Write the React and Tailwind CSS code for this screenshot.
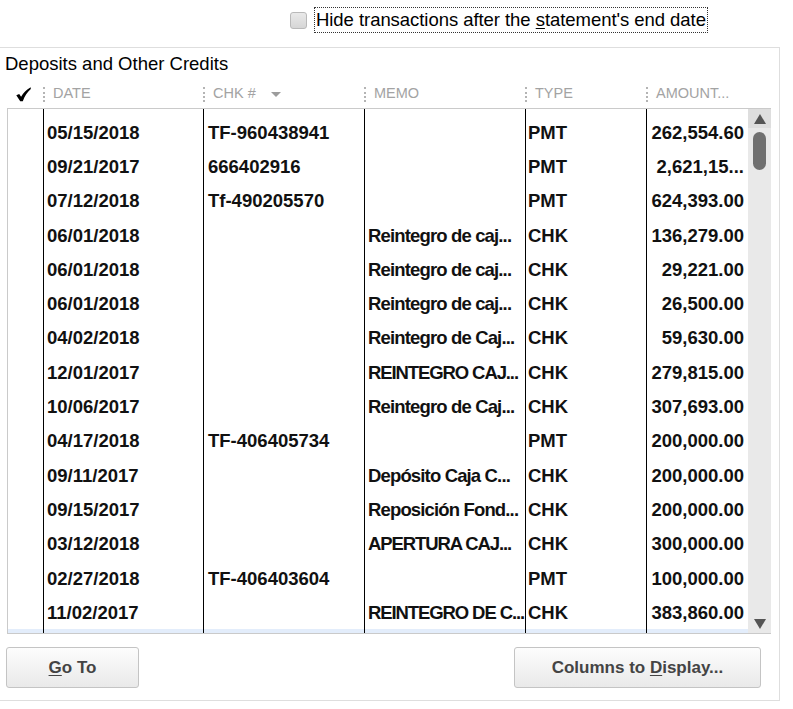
import React from 'react'

const rows = [
  ['05/15/2018', 'TF-960438941', '', 'PMT', '262,554.60'],
  ['09/21/2017', '666402916', '', 'PMT', '2,621,15...'],
  ['07/12/2018', 'Tf-490205570', '', 'PMT', '624,393.00'],
  ['06/01/2018', '', 'Reintegro de caj...', 'CHK', '136,279.00'],
  ['06/01/2018', '', 'Reintegro de caj...', 'CHK', '29,221.00'],
  ['06/01/2018', '', 'Reintegro de caj...', 'CHK', '26,500.00'],
  ['04/02/2018', '', 'Reintegro de Caj...', 'CHK', '59,630.00'],
  ['12/01/2017', '', 'REINTEGRO CAJ...', 'CHK', '279,815.00'],
  ['10/06/2017', '', 'Reintegro de Caj...', 'CHK', '307,693.00'],
  ['04/17/2018', 'TF-406405734', '', 'PMT', '200,000.00'],
  ['09/11/2017', '', 'Depósito Caja C...', 'CHK', '200,000.00'],
  ['09/15/2017', '', 'Reposición Fond...', 'CHK', '200,000.00'],
  ['03/12/2018', '', 'APERTURA CAJ...', 'CHK', '300,000.00'],
  ['02/27/2018', 'TF-406403604', '', 'PMT', '100,000.00'],
  ['11/02/2017', '', 'REINTEGRO DE C...', 'CHK', '383,860.00'],
]

function Cells({ row, className = '' }) {
  const [date, chk, memo, type, amount] = row || ['', '', '', '', '']
  const caps = memo && memo === memo.toUpperCase()
  return (
    <div className={`flex ${className}`}>
      <div className="w-[35px]" />
      <div className="flex w-[160px] items-center border-l border-black pl-[3px]">{date}</div>
      <div className="flex w-[161px] items-center border-l border-black pl-[4px]">{chk}</div>
      <div className={`flex w-[161px] items-center overflow-hidden whitespace-nowrap border-l border-black pl-[3px] ${caps ? 'tracking-[-1.1px]' : 'tracking-[-0.85px]'}`}>{memo}</div>
      <div className="flex w-[121px] items-center border-l border-black pl-[2px]">{type}</div>
      <div className="flex w-[102px] items-center justify-end border-l border-black pr-[4px]">{amount}</div>
    </div>
  )
}

function HeaderCell({ width, label, children }) {
  return (
    <div className={`flex items-center ${width}`}>
      <div className="h-[15px] border-l-2 border-dotted border-[#b4b4b4]" />
      <span className="ml-[8px]">{label}</span>
      {children}
    </div>
  )
}

function Check() {
  return (
    <svg width="15" height="15" viewBox="0 0 15 15">
      <path d="M0.3 8.2 L3.2 7 L5.1 9.8 C7.3 6 10.3 2.6 14.7 0.3 L14.8 2 C11.4 5 8.6 9.2 6.8 14.2 L4.2 14.2 Z" fill="#000" />
    </svg>
  )
}

function Button({ width, children }) {
  return (
    <button className={`h-[41px] ${width} rounded-[3px] border border-[#c4c4c4] bg-gradient-to-b from-[#fdfdfd] to-[#e9e9e9] text-[17px] font-bold text-[#444]`}>
      {children}
    </button>
  )
}

export default function App() {
  return (
    <div className="h-[709px] w-[793px] overflow-hidden bg-white text-[18.5px] text-black" style={{ fontFamily: '"Liberation Sans", Arial, sans-serif' }}>
      <div className="flex h-[47px] items-start pl-[290px] pt-[7px]">
        <div className="flex h-[26px] items-center">
          <div className="h-[17px] w-[17px] rounded-[3px] border border-[#b9b9b9] bg-gradient-to-b from-[#e9e9e9] to-[#d6d6d6]" />
          <div className="ml-[7px] h-[26px] border border-dotted border-[#333] px-[1px] leading-[24px] tracking-[-0.05px]">
            <span>
              Hide transactions after the <span className="underline underline-offset-2">s</span>tatement's end date
            </span>
          </div>
        </div>
      </div>

      <div className="w-[780px] border-y border-r border-[#dedede] pt-[5px] pb-[12px]">
        <div className="h-[21px] pl-[5px] leading-[21px]">Deposits and Other Credits</div>

        <div className="ml-[7px] mt-[6px] flex h-[28px] text-[14.5px] text-[#a3a3a3]">
          <div className="flex w-[36px] items-center pl-[9px]">
            <Check />
          </div>
          <HeaderCell width="w-[160px]" label="DATE" />
          <HeaderCell width="w-[161px]" label="CHK #">
            <div className="ml-[15px] h-0 w-0 border-x-[5px] border-t-[5px] border-x-transparent border-t-[#9c9c9c]" />
          </HeaderCell>
          <HeaderCell width="w-[161px]" label="MEMO" />
          <HeaderCell width="w-[121px]" label="TYPE" />
          <HeaderCell width="w-[102px]" label="AMOUNT..." />
        </div>

        <div className="ml-[7px] flex w-[764px] border-y border-l border-[#cacaca]">
          <div className="flex h-[524px] w-[741px] flex-col overflow-hidden font-bold text-[#111]">
            <Cells className="h-[6px] shrink-0" />
            {rows.map((row, i) => (
              <Cells key={i} row={row} className="h-[34.3px] shrink-0 leading-[21px]" />
            ))}
            <Cells className="flex-1 bg-[#e3edfb]" />
          </div>
          <div className="flex h-[524px] w-[23px] flex-col bg-[#e9e9e9]">
            <div className="flex h-[19px] items-center justify-center bg-[#dedede]">
              <div className="h-0 w-0 border-x-[6px] border-b-[10px] border-x-transparent border-b-[#555]" />
            </div>
            <div className="mx-auto mt-[4px] h-[38px] w-[13px] rounded-full bg-[#707070]" />
            <div className="flex-1" />
            <div className="flex h-[19px] items-center justify-center">
              <div className="h-0 w-0 border-x-[6px] border-t-[10px] border-x-transparent border-t-[#555]" />
            </div>
          </div>
        </div>

        <div className="mt-[13px] flex justify-between pl-[6px] pr-[18px]">
          <Button width="w-[133px]">
            <span className="underline underline-offset-2">G</span>o To
          </Button>
          <Button width="w-[247px]">
            Columns to <span className="underline underline-offset-2">D</span>isplay...
          </Button>
        </div>
      </div>
    </div>
  )
}
